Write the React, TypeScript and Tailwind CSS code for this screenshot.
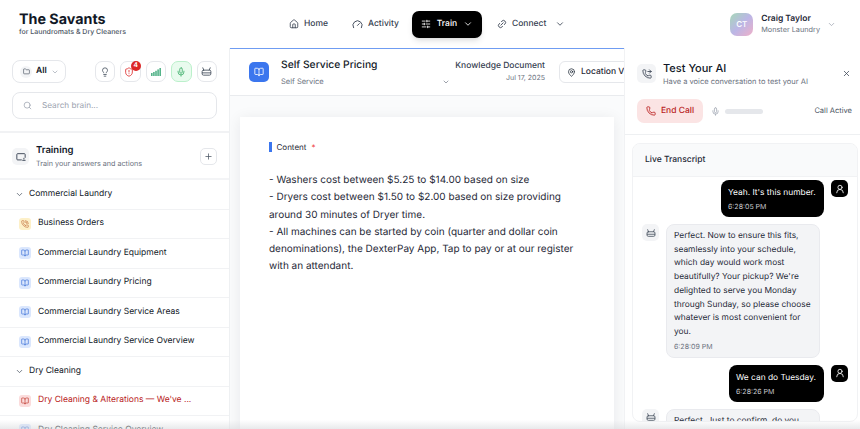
import {
  BookOpen,
  ChevronDown,
  House,
  Gauge,
  Lightbulb,
  Link2,
  MapPin,
  Mic,
  PhoneCall,
  PhoneForwarded,
  Phone,
  Plus,
  Search,
  ShieldAlert,
  SlidersHorizontal,
  UserRound,
  X,
  Folder,
} from "lucide-react";

function BotIcon({ size = 10, className }: { size?: number; className?: string }) {
  return (
    <svg width={size} height={size} viewBox="0 0 24 24" fill="none" stroke="currentColor" strokeWidth="2" strokeLinecap="round" strokeLinejoin="round" className={className}>
      <path d="M6 9 4 4M18 9l2-5" />
      <rect x="2.5" y="9" width="19" height="11" rx="3" />
      <path d="M3 15h18" />
    </svg>
  );
}

function BarsIcon({ className }: { className?: string }) {
  return (
    <svg width="10" height="8" viewBox="0 0 10 8" fill="currentColor" className={className}>
      <rect x="0" y="5" width="1.6" height="3" />
      <rect x="2.1" y="4" width="1.6" height="4" />
      <rect x="4.2" y="2.8" width="1.6" height="5.2" />
      <rect x="6.3" y="1.4" width="1.6" height="6.6" />
      <rect x="8.4" y="0" width="1.6" height="8" />
    </svg>
  );
}

function TrainingIcon({ className }: { className?: string }) {
  return (
    <svg width="10" height="10" viewBox="0 0 24 24" fill="none" stroke="currentColor" strokeWidth="2.2" strokeLinecap="round" strokeLinejoin="round" className={className}>
      <path d="M13 19H4a2 2 0 0 1-2-2V6a2 2 0 0 1 2-2h16a2 2 0 0 1 2 2v7" />
      <path d="M16 20h6M19 15v2" />
    </svg>
  );
}

function Row({ label, tone = "blue" }: { label: string; tone?: "blue" | "amber" | "red" }) {
  return (
    <div className="h-[29.5px] shrink-0 flex items-center gap-[7px] pl-[19px] border-b border-[#f1f2f4]">
      {tone === "amber" && (
        <span className="w-3 h-3 rounded-[3px] bg-[#fdf0c8] flex items-center justify-center text-[#c2703d]">
          <PhoneCall size={8} />
        </span>
      )}
      {tone === "blue" && (
        <span className="w-3 h-3 rounded-[3px] bg-[#dbe7fd] flex items-center justify-center text-[#3b6fd8]">
          <BookOpen size={8} />
        </span>
      )}
      {tone === "red" && (
        <span className="w-3 h-3 rounded-[3px] bg-[#fbdcdc] flex items-center justify-center text-[#c0392f]">
          <BookOpen size={8} />
        </span>
      )}
      <span className={`text-[8.5px] whitespace-nowrap ${tone === "red" ? "text-[#b91c1c]" : "text-[#111827]"}`}>{label}</span>
    </div>
  );
}

function Group({ label }: { label: string }) {
  return (
    <div className="h-[29.5px] shrink-0 flex items-center gap-[5px] pl-[15px] border-b border-[#f1f2f4]">
      <ChevronDown size={9} className="text-[#4b5563]" />
      <span className="text-[8.5px] text-[#111827]">{label}</span>
    </div>
  );
}

function ToolBtn({ children, green }: { children: React.ReactNode; green?: boolean }) {
  return (
    <div className={`relative w-[20.5px] h-[20.5px] rounded-[7px] border flex items-center justify-center ${green ? "bg-[#e9fbee] border-[#bbf0cb]" : "bg-white border-[#e5e7eb]"}`}>
      {children}
    </div>
  );
}

function NavItem({ icon, label, chevron }: { icon: React.ReactNode; label: string; chevron?: boolean }) {
  return (
    <div className="flex items-center gap-[5px] text-[8.5px] font-medium text-[#374151]">
      {icon}
      <span>{label}</span>
      {chevron && <ChevronDown size={10} className="ml-[4px]" />}
    </div>
  );
}

function UserBubble({ text, time, width }: { text: string; time: string; width: string }) {
  return (
    <div className="flex justify-end items-start gap-[7px] pr-[9px]">
      <div className={`bg-black text-white rounded-[8px] px-[7px] pt-[7px] h-[37px] ${width}`}>
        <div className="text-[8.4px] leading-[13px] whitespace-nowrap">{text}</div>
        <div className="text-[7px] leading-[10px] mt-[2px] text-[#c7c9cd]">{time}</div>
      </div>
      <div className="w-[17px] h-[17px] rounded-[5px] bg-black text-white flex items-center justify-center">
        <UserRound size={10} />
      </div>
    </div>
  );
}

function BotBubble({ children }: { children: React.ReactNode }) {
  return (
    <div className="flex items-start gap-[7px] pl-[9px]">
      <div className="w-[17px] h-[17px] rounded-[5px] bg-[#f3f4f6] text-[#4b5563] flex items-center justify-center shrink-0">
        <BotIcon size={10} />
      </div>
      <div className="w-[154px] shrink-0 bg-[#f3f4f6] border border-[#e9eaee] rounded-[8px] pl-[7px] pr-[6px] pt-[5px] pb-[5px]">
        {children}
      </div>
    </div>
  );
}

export default function App() {
  return (
    <div className="relative w-[860px] h-[429px] overflow-hidden bg-white flex flex-col font-['Inter',sans-serif] [text-rendering:geometricPrecision] antialiased text-[#111827]">
      {/* Top nav */}
      <header className="h-[48px] shrink-0 flex items-center bg-white">
        <div className="w-[289px] pl-[19px] shrink-0">
          <div className="text-[14.3px] leading-[15px] font-bold text-[#111827]">The Savants</div>
          <div className="text-[7px] leading-[9px] font-medium text-[#4b5563]">for Laundromats &amp; Dry Cleaners</div>
        </div>
        <div className="flex items-center">
          <div className="w-[63px]"><NavItem icon={<House size={10} />} label="Home" /></div>
          <div className="w-[60px]"><NavItem icon={<Gauge size={11} />} label="Activity" /></div>
          <div className="w-[70px] h-[27px] rounded-[7px] bg-black text-white flex items-center justify-center gap-[6px] text-[8.5px] font-medium shadow-md">
            <SlidersHorizontal size={10} />
            <span>Train</span>
            <ChevronDown size={10} />
          </div>
          <div className="ml-[15px]"><NavItem icon={<Link2 size={10} className="-rotate-45" />} label="Connect" chevron /></div>
        </div>
        <div className="ml-auto flex items-center pr-[24px]">
          <div className="w-[23px] h-[23px] rounded-[7px] bg-[linear-gradient(135deg,#a6d8b8,#bbb6e6_50%,#efb0c8)] text-white text-[8px] font-medium flex items-center justify-center">CT</div>
          <div className="ml-[8px]">
            <div className="text-[8.5px] leading-[11px] font-semibold text-[#1f2937]">Craig Taylor</div>
            <div className="text-[7.3px] leading-[10px] text-[#6b7280]">Monster Laundry</div>
          </div>
          <ChevronDown size={9} className="ml-[7px] text-[#9ca3af]" />
        </div>
      </header>

      <div className="flex-1 flex min-h-0">
        {/* Left sidebar */}
        <aside className="w-[230px] shrink-0 border-r border-[#eef0f2] flex flex-col bg-white overflow-hidden">
          <div className="shrink-0 px-[12px] pt-[12px] pb-[12px] border-b-2 border-[#f1f2f4]">
            <div className="flex items-center">
              <div className="w-[54px] h-[23px] border border-[#e5e7eb] rounded-[8px] flex items-center pl-[7px] gap-[4px]">
                <span className="w-3 h-3 rounded-full bg-[#f3f4f6] flex items-center justify-center">
                  <Folder size={7} className="text-[#374151]" />
                </span>
                <span className="text-[8.5px] font-semibold text-[#111827]">All</span>
                <ChevronDown size={8} className="text-[#9ca3af]" />
              </div>
              <div className="ml-auto flex items-center gap-[5px]">
                <ToolBtn><Lightbulb size={10} className="text-[#4b5563]" /></ToolBtn>
                <ToolBtn>
                  <ShieldAlert size={10} className="text-[#dc2626] -ml-[2px] mt-[1px]" />
                  <span className="absolute -top-[1px] -right-[1px] w-[9.5px] h-[9.5px] rounded-full bg-[#dc2626] text-white text-[6.5px] font-bold flex items-center justify-center">4</span>
                </ToolBtn>
                <ToolBtn><BarsIcon className="text-[#55b48a]" /></ToolBtn>
                <ToolBtn green><Mic size={10} className="text-[#3fae6a]" /></ToolBtn>
                <ToolBtn><BotIcon size={11} className="text-[#4b5563]" /></ToolBtn>
              </div>
            </div>
            <div className="mt-[9px] h-[27px] border border-[#e5e7eb] rounded-[8px] flex items-center pl-[10px] gap-[10px]">
              <Search size={9} className="text-[#9ca3af]" />
              <span className="text-[8.2px] text-[#9ca3af]">Search brain...</span>
            </div>
          </div>
          <div className="h-[47px] shrink-0 flex items-center pl-[12px] pr-[12px] pt-[2px] border-b-2 border-[#f3f4f6]">
            <div className="w-[17px] h-[17px] rounded-[5px] bg-[#f3f4f6] flex items-center justify-center">
              <TrainingIcon className="text-[#374151]" />
            </div>
            <div className="ml-[7px]">
              <div className="text-[9.5px] leading-[12px] font-semibold text-[#111827]">Training</div>
              <div className="mt-[2px] text-[7.2px] leading-[10px] text-[#6b7280]">Train your answers and actions</div>
            </div>
            <div className="ml-auto w-[17px] h-[17px] rounded-[5px] border border-[#e5e7eb] flex items-center justify-center">
              <Plus size={9} className="text-[#4b5563]" />
            </div>
          </div>
          <Group label="Commercial Laundry" />
          <Row label="Business Orders" tone="amber" />
          <Row label="Commercial Laundry Equipment" />
          <Row label="Commercial Laundry Pricing" />
          <Row label="Commercial Laundry Service Areas" />
          <Row label="Commercial Laundry Service Overview" />
          <Group label="Dry Cleaning" />
          <Row label="Dry Cleaning & Alterations — We've ..." tone="red" />
          <Row label="Dry Cleaning Service Overview" />
        </aside>

        {/* Main editor */}
        <main className="w-[394px] shrink-0 border-t-[1.5px] border-[#6f9cf2] bg-[#fafbfc] flex flex-col overflow-hidden">
          <div className="h-[47px] shrink-0 bg-white border-b border-[#e9ebee] flex items-center pl-[19px] overflow-hidden">
            <div className="w-5 h-5 rounded-[5px] bg-[#3b76ee] flex items-center justify-center shrink-0">
              <BookOpen size={10} className="text-white" />
            </div>
            <div className="ml-[12px] w-[169px] shrink-0">
              <div className="text-[10.3px] leading-[14px] font-medium text-[#111827]">Self Service Pricing</div>
              <div className="mt-[5px] flex items-center justify-between text-[7.5px] leading-[10px] text-[#6b7280]">
                <span>Self Service</span>
                <ChevronDown size={8} className="mt-[1px]" />
              </div>
            </div>
            <div className="w-[95px] shrink-0 text-right">
              <div className="text-[8.5px] leading-[11px] font-medium text-[#374151]">Knowledge Document</div>
              <div className="mt-[1px] text-[7px] leading-[10px] text-[#6b7280]">Jul 17, 2025</div>
            </div>
            <div className="ml-[14px] w-[90px] h-[22px] shrink-0 border border-[#e5e7eb] rounded-[6px] flex items-center gap-[5px] pl-[7px] text-[8.5px] font-medium text-[#1f2937] whitespace-nowrap">
              <MapPin size={9} />
              <span>Location V</span>
            </div>
          </div>
          <div className="flex-1 px-[10px] pt-[21px] min-h-0">
            <div className="h-[340px] bg-white shadow-[0_2px_14px_rgba(17,24,39,0.08)] px-[29px] pt-[24px]">
              <div className="flex items-center text-[8px] text-[#1f2937]">
                <span className="w-[2.5px] h-[10px] bg-[#3b76ee] mr-[5px]" />
                <span>Content</span>
                <span className="ml-[5px] text-[#ef4444]">*</span>
              </div>
              <p className="mt-[19px] text-[10px] leading-[17.3px] text-[#1f2937]">
                - Washers cost between $5.25 to $14.00 based on size
                <br />- Dryers cost between $1.50 to $2.00 based on size providing around 30 minutes of Dryer time.
                <br />- All machines can be started by coin (quarter and dollar coin denominations), the DexterPay App, Tap to pay or at our register with an attendant.
              </p>
            </div>
          </div>
        </main>

        {/* Test panel */}
        <aside className="flex-1 min-w-0 bg-white border-l border-[#f1f2f4] flex flex-col overflow-hidden">
          <div className="h-[87px] shrink-0 border-b border-[#eef0f2] px-[12px] pt-[16px]">
            <div className="flex items-start">
              <div className="w-[19px] h-[19px] rounded-[5px] bg-[#f3f4f6] flex items-center justify-center">
                <PhoneForwarded size={10} className="text-[#374151]" />
              </div>
              <div className="ml-[7px] -mt-[3px]">
                <div className="text-[11px] leading-[14px] font-medium text-[#111827]">Test Your AI</div>
                <div className="mt-[2px] text-[7.5px] leading-[10px] text-[#6b7280]">Have a voice conversation to test your AI</div>
              </div>
              <X size={9} className="ml-auto mt-[5px] -mr-[3px] text-[#374151]" />
            </div>
            <div className="mt-[12px] flex items-center -mr-[4px]">
              <div className="w-[66px] h-[24px] rounded-[7px] bg-[#fbe4e4] text-[#b91c1c] flex items-center justify-center gap-[5px] text-[8.5px] font-medium">
                <Phone size={10} />
                <span>End Call</span>
              </div>
              <Mic size={9} className="ml-[8px] text-[#9ca3af]" />
              <span className="ml-[5px] w-[38px] h-[5px] rounded-full bg-[#e5e7eb]" />
              <span className="ml-auto text-[7.5px] text-[#4b5563]">Call Active</span>
            </div>
          </div>
          <div className="flex-1 min-h-0 pt-[8px] pl-[7px] pr-[2px] pb-[7px]">
            <div className="h-full rounded-[8px] border border-[#f1f2f4] overflow-hidden flex flex-col">
              <div className="h-[33px] shrink-0 bg-[#f9fafb] border-b border-[#f1f2f4] flex items-center pl-[12px] text-[8.5px] font-medium text-[#1f2937]">Live Transcript</div>
              <div className="flex-1 min-h-0 overflow-hidden pt-[3px] flex flex-col gap-[7px]">
                <UserBubble text="Yeah. It's this number." time="6:28:05 PM" width="w-[103px]" />
                <BotBubble>
                  <p className="text-[8.4px] leading-[13.7px] text-[#1f2937]">
                    Perfect. Now to ensure this fits, seamlessly into your schedule, which day would work most beautifully? Your pickup? We're delighted to serve you Monday through Sunday, so please choose whatever is most convenient for you.
                  </p>
                  <div className="mt-[2px] text-[7px] leading-[10px] text-[#6b7280]">6:28:09 PM</div>
                </BotBubble>
                <UserBubble text="We can do Tuesday." time="6:28:26 PM" width="w-[95px]" />
                <BotBubble>
                  <p className="text-[8.4px] leading-[13.7px] text-[#1f2937]">Perfect. Just to confirm, do you</p>
                </BotBubble>
              </div>
            </div>
          </div>
        </aside>
      </div>
      {/* soft fade at bottom edge of the capture */}
      <div className="absolute left-0 right-0 bottom-0 h-[9px] bg-gradient-to-b from-transparent to-[#d9dbde]/60" />
    </div>
  );
}
